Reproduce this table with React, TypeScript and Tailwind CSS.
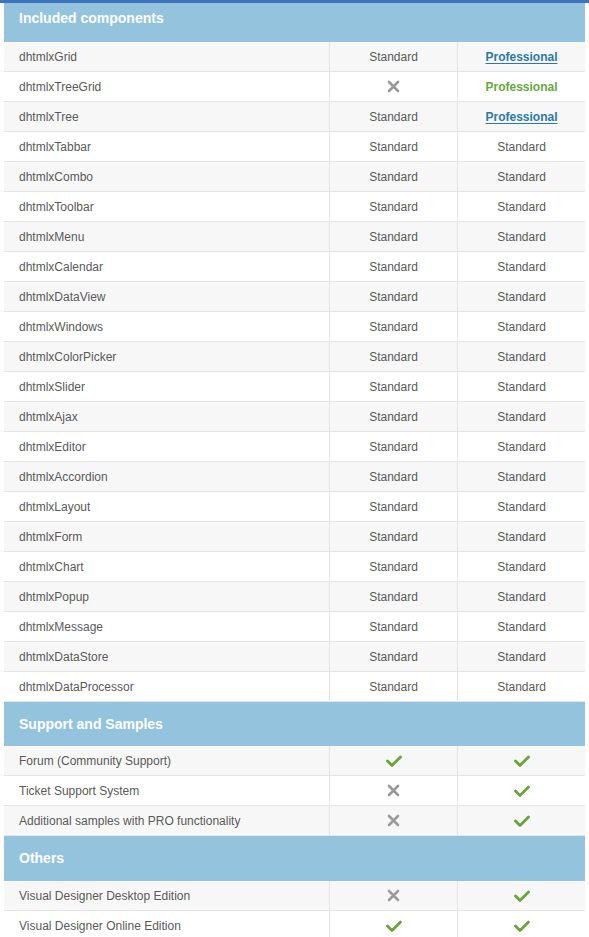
import React from "react";

type Cell = "std" | "x" | "check" | "proLink" | "proGreen";

const comps: [string, Cell, Cell][] = [
  ["dhtmlxGrid", "std", "proLink"],
  ["dhtmlxTreeGrid", "x", "proGreen"],
  ["dhtmlxTree", "std", "proLink"],
  ["dhtmlxTabbar", "std", "std"],
  ["dhtmlxCombo", "std", "std"],
  ["dhtmlxToolbar", "std", "std"],
  ["dhtmlxMenu", "std", "std"],
  ["dhtmlxCalendar", "std", "std"],
  ["dhtmlxDataView", "std", "std"],
  ["dhtmlxWindows", "std", "std"],
  ["dhtmlxColorPicker", "std", "std"],
  ["dhtmlxSlider", "std", "std"],
  ["dhtmlxAjax", "std", "std"],
  ["dhtmlxEditor", "std", "std"],
  ["dhtmlxAccordion", "std", "std"],
  ["dhtmlxLayout", "std", "std"],
  ["dhtmlxForm", "std", "std"],
  ["dhtmlxChart", "std", "std"],
  ["dhtmlxPopup", "std", "std"],
  ["dhtmlxMessage", "std", "std"],
  ["dhtmlxDataStore", "std", "std"],
  ["dhtmlxDataProcessor", "std", "std"],
];

const support: [string, Cell, Cell][] = [
  ["Forum (Community Support)", "check", "check"],
  ["Ticket Support System", "x", "check"],
  ["Additional samples with PRO functionality", "x", "check"],
];

const others: [string, Cell, Cell][] = [
  ["Visual Designer Desktop Edition", "x", "check"],
  ["Visual Designer Online Edition", "check", "check"],
];

const Check = () => (
  <svg width="16" height="12" viewBox="0 0 16 12">
    <path d="M1.5 6 L6 10.5 L14.5 2" fill="none" stroke="#6aa33b" strokeWidth="2.8" strokeLinecap="round" strokeLinejoin="round" />
  </svg>
);

const Cross = () => (
  <svg width="13" height="13" viewBox="0 0 13 13">
    <path d="M2 2 L11 11 M11 2 L2 11" fill="none" stroke="#9a9a9a" strokeWidth="2.6" strokeLinecap="round" />
  </svg>
);

function renderCell(c: Cell) {
  switch (c) {
    case "std":
      return <span className="text-[#5a5a5a]">Standard</span>;
    case "x":
      return <Cross />;
    case "check":
      return <Check />;
    case "proLink":
      return <span className="font-bold text-[#2b7aa6] underline underline-offset-2">Professional</span>;
    case "proGreen":
      return <span className="font-bold text-[#67a83f]">Professional</span>;
  }
}

function Rows({ rows }: { rows: [string, Cell, Cell][] }) {
  return (
    <>
      {rows.map(([name, a, b], i) => {
        const shaded = i % 2 === 0;
        return (
          <div
            key={name}
            className={`grid grid-cols-[326px_128px_127px] h-[30px] border-b border-[#e4e4e4] ${shaded ? "bg-[#f7f7f7]" : "bg-white"}`}
          >
            <div className="flex items-center pl-[15px] text-[#5a5a5a] border-r border-[#e4e4e4]">{name}</div>
            <div className="flex items-center justify-center border-r border-[#e4e4e4]">{renderCell(a)}</div>
            <div className="flex items-center justify-center">{renderCell(b)}</div>
          </div>
        );
      })}
    </>
  );
}

export default function App() {
  return (
    <div className="w-[589px] h-[937px] overflow-hidden bg-white" style={{ fontFamily: '"Liberation Sans", Arial, sans-serif' }}>
      <div className="h-[3px] bg-[#3f72bd]" />
      <div className="pl-[4px] w-[585px] text-[12px]">
        <div className="bg-[#93c3dd] h-[39px] pl-[15px] pt-[5px] leading-[20px] text-white font-bold text-[14px]">Included components</div>
        <Rows rows={comps} />
        <div className="bg-[#93c3dd] h-[44px] flex items-center pl-[15px] text-white font-bold text-[14px]">Support and Samples</div>
        <Rows rows={support} />
        <div className="bg-[#93c3dd] h-[45px] flex items-center pl-[15px] text-white font-bold text-[14px]">Others</div>
        <Rows rows={others} />
      </div>
    </div>
  );
}
